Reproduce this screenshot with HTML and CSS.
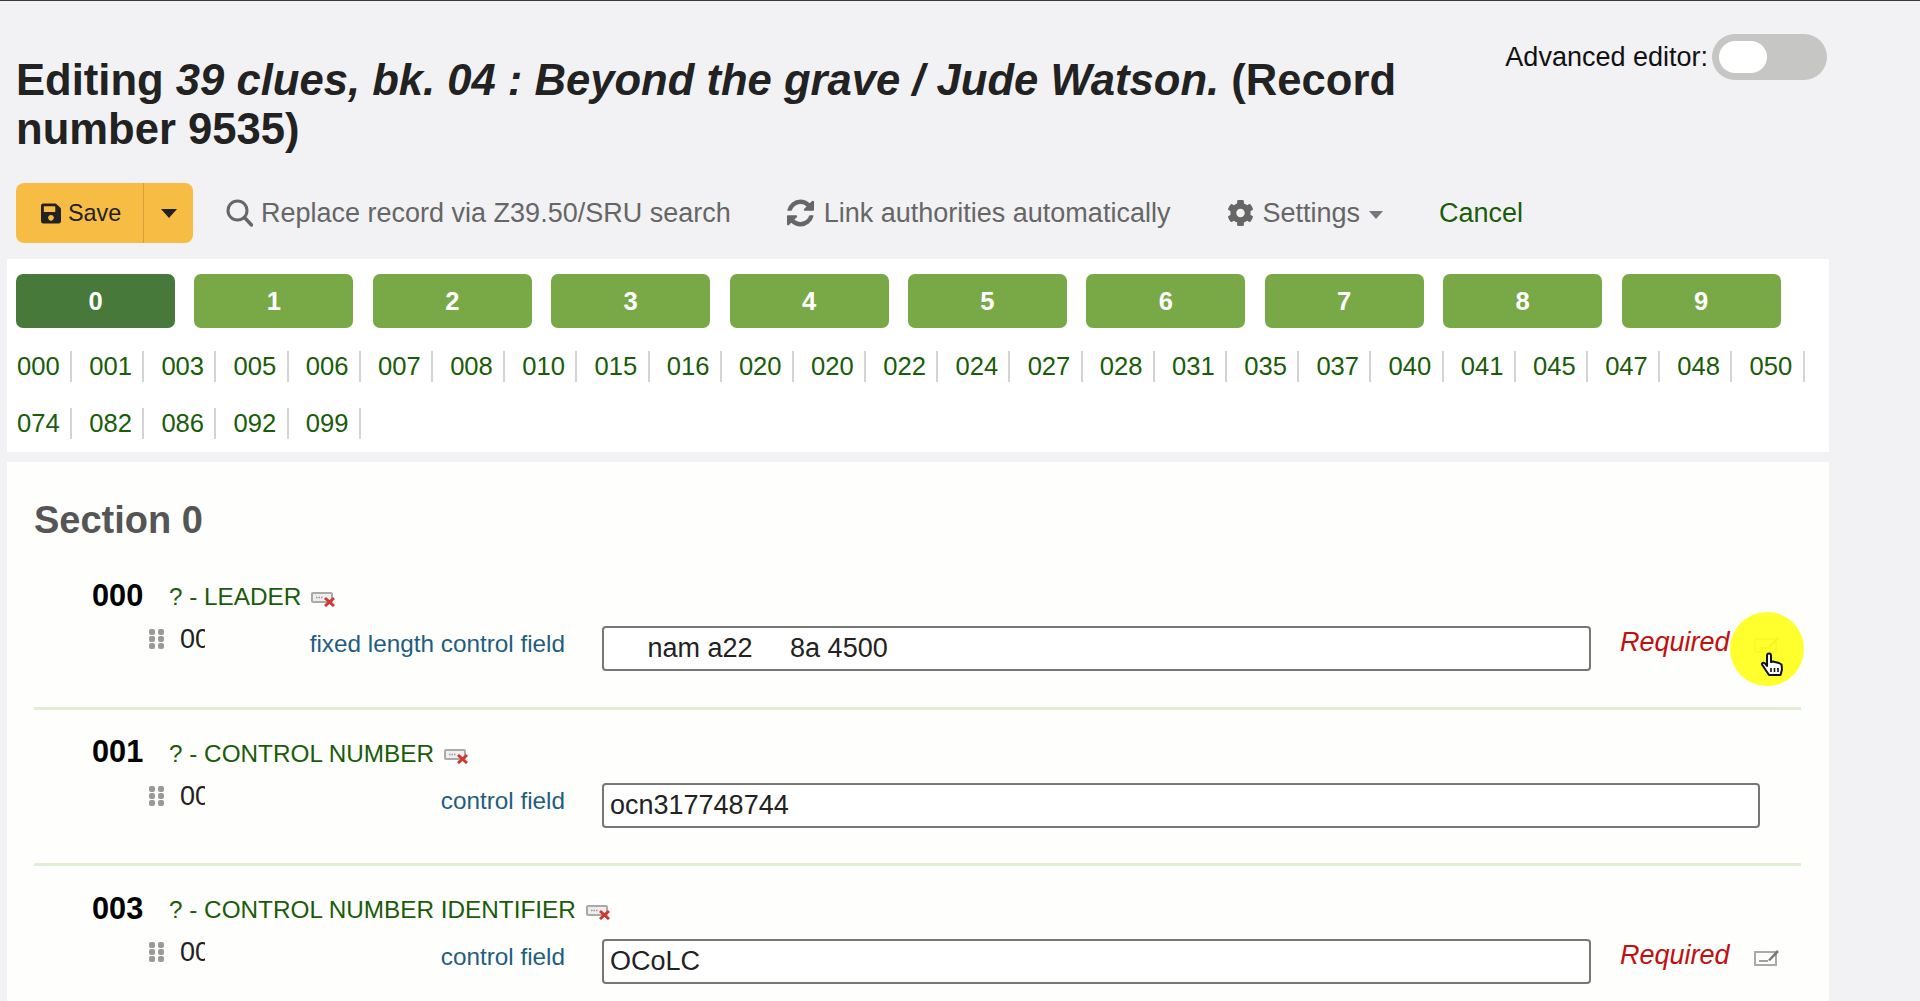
FILE: index.html
```html
<!DOCTYPE html>
<html lang="en">
<head>
<meta charset="utf-8">
<title>Editing record</title>
<link rel="stylesheet" href="styles.css">
</head>
<body>
<div class="page">
  <header class="header">
    <h1 class="title">Editing <em>39 clues, bk. 04 : Beyond the grave / Jude Watson.</em> (Record number 9535)</h1>
    <div class="toggle-wrap">
      <span class="toggle-label">Advanced editor:</span>
      <span class="toggle"><span class="knob"></span></span>
    </div>
  </header>

  <div class="toolbar">
    <div class="save-group">
      <button class="save-main">
        <svg class="save-icon" viewBox="0 0 448 512"><path d="M433.941 129.941l-83.882-83.882A48 48 0 0 0 316.118 32H48C21.49 32 0 53.49 0 80v352c0 26.51 21.49 48 48 48h352c26.51 0 48-21.49 48-48V163.882a48 48 0 0 0-14.059-33.941zM224 416c-35.346 0-64-28.654-64-64 0-35.346 28.654-64 64-64s64 28.654 64 64c0 35.346-28.654 64-64 64zm96-304.52V212c0 6.627-5.373 12-12 12H76c-6.627 0-12-5.373-12-12V108c0-6.627 5.373-12 12-12h228.52c3.183 0 6.235 1.264 8.485 3.515l3.48 3.48A11.996 11.996 0 0 1 320 111.48z"/></svg>
        <span>Save</span>
      </button>
      <button class="save-caret"><span class="caret-dark"></span></button>
    </div>
    <a class="tool tool-search">
      <svg class="tool-icon" viewBox="0 0 27 28"><circle cx="11.5" cy="11.5" r="9.5" fill="none" stroke="#666" stroke-width="3"/><path d="M18.5 18.5L25.5 26" fill="none" stroke="#666" stroke-width="3.4" stroke-linecap="round"/></svg>
      <span>Replace record via Z39.50/SRU search</span>
    </a>
    <a class="tool tool-link">
      <svg class="tool-icon" viewBox="128 128 1536 1536"><path fill="#666" d="M1639 1056q0 5-1 7-64 268-268 434.500t-478 166.500q-146 0-282.500-55t-243.500-157l-129 129q-19 19-45 19t-45-19-19-45v-448q0-26 19-45t45-19h448q26 0 45 19t19 45-19 45l-137 137q71 66 161 102t187 36q134 0 250-65t186-179q11-17 53-117 8-23 30-23h192q13 0 22.500 9.500t9.500 22.500zm25-800v448q0 26-19 45t-45 19h-448q-26 0-45-19t-19-45 19-45l138-138q-148-137-349-137-134 0-250 65t-186 179q-11 17-53 117-8 23-30 23h-199q-13 0-22.500-9.500t-9.500-22.500v-7q65-268 270-434.500t480-166.500q146 0 284 55.500t245 156.500l130-129q19-19 45-19t45 19 19 45z"/></svg>
      <span>Link authorities automatically</span>
    </a>
    <a class="tool tool-settings">
      <svg class="tool-icon" viewBox="0 0 512 512"><path fill="#666" d="M487.4 315.7l-42.6-24.6c4.3-23.2 4.3-47 0-70.2l42.6-24.6c4.9-2.8 7.1-8.6 5.5-14-11.1-35.6-30-67.8-54.7-94.6-3.8-4.1-10-5.1-14.8-2.3L380.8 110c-17.9-15.4-38.5-27.3-60.8-35.1V25.8c0-5.6-3.9-10.5-9.4-11.7-36.7-8.2-74.3-7.8-109.2 0-5.5 1.2-9.4 6.1-9.4 11.7V75c-22.2 7.9-42.8 19.8-60.8 35.1L88.7 85.5c-4.9-2.8-11-1.9-14.8 2.3-24.7 26.7-43.6 58.9-54.7 94.6-1.7 5.4.6 11.2 5.5 14L67.3 221c-4.3 23.2-4.3 47 0 70.2l-42.6 24.6c-4.9 2.8-7.1 8.6-5.5 14 11.1 35.6 30 67.8 54.7 94.6 3.8 4.1 10 5.1 14.8 2.3l42.6-24.6c17.9 15.4 38.5 27.3 60.8 35.1v49.2c0 5.6 3.9 10.5 9.4 11.7 36.7 8.2 74.3 7.8 109.2 0 5.5-1.2 9.4-6.1 9.4-11.7v-49.2c22.2-7.9 42.8-19.8 60.8-35.1l42.6 24.6c4.9 2.8 11 1.9 14.8-2.3 24.7-26.7 43.6-58.9 54.7-94.6 1.5-5.5-.7-11.3-5.6-14.1zM256 336c-44.1 0-80-35.9-80-80s35.9-80 80-80 80 35.9 80 80-35.9 80-80 80z"/></svg>
      <span>Settings</span>
      <span class="caret-gray"></span>
    </a>
    <a class="cancel">Cancel</a>
  </div>

  <nav class="tabs-panel">
    <div class="tabs">
      <a class="tab active">0</a><a class="tab">1</a><a class="tab">2</a><a class="tab">3</a><a class="tab">4</a><a class="tab">5</a><a class="tab">6</a><a class="tab">7</a><a class="tab">8</a><a class="tab">9</a>
    </div>
    <ul class="tag-links">
      <li>000</li><li>001</li><li>003</li><li>005</li><li>006</li><li>007</li><li>008</li><li>010</li><li>015</li><li>016</li><li>020</li><li>020</li><li>022</li><li>024</li><li>027</li><li>028</li><li>031</li><li>035</li><li>037</li><li>040</li><li>041</li><li>045</li><li>047</li><li>048</li><li>050</li><li>074</li><li>082</li><li>086</li><li>092</li><li>099</li>
    </ul>
  </nav>

  <section class="section">
    <h3 class="section-title">Section 0</h3>

    <div class="field">
      <div class="field-head">
        <span class="tag">000</span>
        <span class="tag-name">? - LEADER</span>
        <svg class="del-icon" viewBox="0 0 25 15"><rect x="1" y="1" width="20" height="9" rx="1" fill="#eee" stroke="#aaa" stroke-width="2"/><path d="M5 5.500h7" stroke="#999" stroke-width="1.500" stroke-dasharray="1.500 1"/><path d="M14 6l9 8M23 6l-9 8" stroke="#cc3a33" stroke-width="3"/></svg>
      </div>
      <div class="field-row">
        <svg class="grip" viewBox="0 0 15 20"><g fill="#999"><rect width="6" height="6" rx="2"/><rect x="9" width="6" height="6" rx="2"/><rect y="7" width="6" height="6" rx="2"/><rect x="9" y="7" width="6" height="6" rx="2"/><rect y="14" width="6" height="6" rx="2"/><rect x="9" y="14" width="6" height="6" rx="2"/></g></svg>
        <span class="code">00</span>
        <label class="label">fixed length control field</label>
        <input class="input short" type="text" value="     nam a22     8a 4500">
        <em class="required">Required</em>
        <svg class="edit-icon" viewBox="0 0 26 18"><rect x="1" y="4" width="21" height="13" fill="none" stroke="#aaa" stroke-width="2"/><path d="M5 13h9" stroke="#888" stroke-width="1.600"/><path d="M14 12l9-10 2 2-9 9z" fill="#777"/></svg>
        <span class="highlight">
          <svg class="hand" viewBox="0 0 24 26"><path d="M7 14V3.500a2 2 0 0 1 4 0V10l2-.5 3 .7 3 .8 2.500 1.500.5 5-1.500 5.500H9l-4-6-3-4.500c-.5-1.500 1.500-2.500 3-1z" fill="#fff" stroke="#111" stroke-width="2" stroke-linejoin="round"/><path d="M11 16v4M14.500 16v4M18 16v4" stroke="#111" stroke-width="1.600"/></svg>
        </span>
      </div>
    </div>

    <div class="field">
      <div class="field-head">
        <span class="tag">001</span>
        <span class="tag-name">? - CONTROL NUMBER</span>
        <svg class="del-icon" viewBox="0 0 25 15"><rect x="1" y="1" width="20" height="9" rx="1" fill="#eee" stroke="#aaa" stroke-width="2"/><path d="M5 5.500h7" stroke="#999" stroke-width="1.500" stroke-dasharray="1.500 1"/><path d="M14 6l9 8M23 6l-9 8" stroke="#cc3a33" stroke-width="3"/></svg>
      </div>
      <div class="field-row">
        <svg class="grip" viewBox="0 0 15 20"><g fill="#999"><rect width="6" height="6" rx="2"/><rect x="9" width="6" height="6" rx="2"/><rect y="7" width="6" height="6" rx="2"/><rect x="9" y="7" width="6" height="6" rx="2"/><rect y="14" width="6" height="6" rx="2"/><rect x="9" y="14" width="6" height="6" rx="2"/></g></svg>
        <span class="code">00</span>
        <label class="label">control field</label>
        <input class="input long" type="text" value="ocn317748744">
      </div>
    </div>

    <div class="field">
      <div class="field-head">
        <span class="tag">003</span>
        <span class="tag-name">? - CONTROL NUMBER IDENTIFIER</span>
        <svg class="del-icon" viewBox="0 0 25 15"><rect x="1" y="1" width="20" height="9" rx="1" fill="#eee" stroke="#aaa" stroke-width="2"/><path d="M5 5.500h7" stroke="#999" stroke-width="1.500" stroke-dasharray="1.500 1"/><path d="M14 6l9 8M23 6l-9 8" stroke="#cc3a33" stroke-width="3"/></svg>
      </div>
      <div class="field-row">
        <svg class="grip" viewBox="0 0 15 20"><g fill="#999"><rect width="6" height="6" rx="2"/><rect x="9" width="6" height="6" rx="2"/><rect y="7" width="6" height="6" rx="2"/><rect x="9" y="7" width="6" height="6" rx="2"/><rect y="14" width="6" height="6" rx="2"/><rect x="9" y="14" width="6" height="6" rx="2"/></g></svg>
        <span class="code">00</span>
        <label class="label">control field</label>
        <input class="input short" type="text" value="OCoLC">
        <em class="required">Required</em>
        <svg class="edit-icon" viewBox="0 0 26 18"><rect x="1" y="4" width="21" height="13" fill="none" stroke="#aaa" stroke-width="2"/><path d="M5 13h9" stroke="#888" stroke-width="1.600"/><path d="M14 12l9-10 2 2-9 9z" fill="#777"/></svg>
      </div>
    </div>
  </section>
</div>
</body>
</html>
```

FILE: styles.css
```css
* { box-sizing: border-box; }
html, body { margin: 0; padding: 0; height: 1001px; overflow: hidden; }
body {
  background: #f2f2f5;
  border-top: 1px solid #3a3a3e;
  font-family: "Liberation Sans", Arial, sans-serif;
  font-size: 27px;
  color: #222;
}
.page { width: 1822px; height: 1000px; margin-left: 7px; overflow: hidden; }

.header { display: flex; align-items: flex-start; padding: 33px 2px 0 9px; }
.title {
  flex: 1;
  margin: 22px 0 0;
  font-size: 43.6px;
  line-height: 49px;
  font-weight: 700;
  color: #222;
}
.toggle-wrap { display: flex; align-items: center; gap: 4px; }
.toggle-label { color: #111; font-size: 27px; }
.toggle {
  display: block;
  width: 115px;
  height: 46px;
  padding: 7px;
  background: #c6c6c4;
  border-radius: 23px;
}
.knob { display: block; width: 48px; height: 32px; background: #fff; border-radius: 16px; }

.toolbar { display: flex; align-items: center; height: 60px; margin: 29px 0 16px; padding-left: 9px; color: #666; }
.save-group { display: flex; height: 60px; background: #f7bc44; border-radius: 8px; }
.save-main, .save-caret {
  display: flex;
  align-items: center;
  height: 100%;
  border: 0;
  background: transparent;
  color: #222;
  font: 23.4px "Liberation Sans", Arial, sans-serif;
}
.save-main { width: 128px; padding: 0 0 0 25px; gap: 7px; border-right: 1px solid #d69f3a; }
.save-icon { width: 20px; height: 23px; fill: #222; }
.save-caret { width: 49px; padding: 0 0 0 17px; }
.caret-dark { width: 0; height: 0; border-left: 8px solid transparent; border-right: 8px solid transparent; border-top: 9px solid #222; }
.tool { display: flex; align-items: center; color: #666; }
.tool-icon { width: 27px; height: 28px; flex: none; }
.tool-search { margin-left: 33px; gap: 8px; }
.tool-link { margin-left: 56px; gap: 10px; }
.tool-settings { margin-left: 57px; gap: 8px; }
.caret-gray { width: 0; height: 0; margin-left: 1px; border-left: 7px solid transparent; border-right: 7px solid transparent; border-top: 8px solid #777; margin-top: 4px; }
.cancel { margin-left: 56px; color: #1a5c0a; }

.tabs-panel { background: #fff; padding: 15px 0 0 9px; height: 193px; }
.tabs { display: flex; gap: 19.4px; }
.tab {
  display: flex;
  align-items: center;
  justify-content: center;
  width: 159px;
  height: 54px;
  background: #78a946;
  border-radius: 7px;
  color: #fff;
  font-weight: 700;
  font-size: 25.6px;
}
.tab.active { background: #477a3a; }
.tag-links { display: flex; flex-wrap: wrap; gap: 26px 0; margin: 23px 0 0; padding: 0; list-style: none; color: #1a5c0a; font-size: 25.6px; }
.tag-links li {
  height: 31px;
  line-height: 31px;
  width: 72.2px;
  position: relative;
  padding-left: 1px;
}
.tag-links li::after {
  content: "";
  position: absolute;
  left: 54px;
  top: 0;
  width: 2px;
  height: 31px;
  background: #d4d4d4;
}

.section { background: #fefefc; margin-top: 10px; padding: 35px 27px 0; height: 600px; }
.section-title { margin: 0 0 10px; font-size: 38px; line-height: 46px; color: #555; font-weight: 700; }
.field { position: relative; width: 1767px; height: 156.5px; padding: 22px 0 0 58px; border-bottom: 3px solid #e0eed5; }
.field-head { display: flex; align-items: center; height: 41px; }
.tag { font-size: 30.7px; font-weight: 700; color: #000; width: 77px; }
.tag-name { color: #1a5c0a; margin-top: 3px; font-size: 24.3px; }
.del-icon { width: 25px; height: 15px; margin: 8px 0 0 10px; }
.field-row { display: flex; align-items: flex-start; margin-top: 10px; }
.grip { width: 15px; height: 20px; margin: 3px 0 0 57px; flex: none; }
.code { width: 25px; overflow: hidden; margin-left: 16px; line-height: 26px; color: #222; white-space: nowrap; }
.label { width: 360px; text-align: right; line-height: 35px; color: #1f5e80; font-size: 24.3px; }
.input {
  margin-left: 37px;
  height: 45px;
  padding: 0 6px;
  border: 2px solid #777;
  border-radius: 4px;
  background: #fff;
  color: #222;
  font: 27px "Liberation Sans", Arial, sans-serif;
}
.input.short { width: 989px; }
.input.long { width: 1158px; }
.required { margin-left: 29px; color: #c01010; line-height: 32px; }
.edit-icon { width: 26px; height: 18px; margin: 9px 0 0 24px; flex: none; }
.highlight {
  position: absolute;
  left: 1696px;
  top: 59px;
  width: 74px;
  height: 74px;
  border-radius: 50%;
  background: rgba(255, 255, 30, 0.93);
}
.hand { position: absolute; left: 30px; top: 40px; width: 24px; height: 26px; }
```
